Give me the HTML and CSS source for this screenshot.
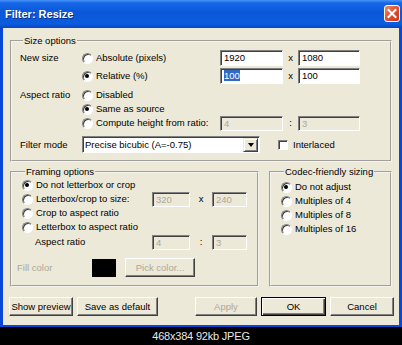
FILE: index.html
```html
<!DOCTYPE html>
<html>
	<head>
		<meta charset="UTF-8">
		<title>Filter: Resize</title>
		<link rel="stylesheet" href="styles.css">
	</head>
	<body>
		<div class="window">
			<div class="titlebar">
				<span class="title">Filter: Resize</span>
				<span class="close">
					<svg width="16" height="17" viewBox="0 0 16 17">
						<path d="M4.5 5 L11.5 12 M11.5 5 L4.5 12" stroke="#fff" stroke-width="2" stroke-linecap="square"/>
					</svg>
				</span>
			</div>
			<div class="client">
				<fieldset class="group size">
					<legend>Size options</legend>
					<div class="row h16">
						<span class="lbl">New size</span>
						<span class="opt"><i class="radio"></i>Absolute (pixels)</span>
						<span class="edit w63">1920</span><span class="sep">x</span><span class="edit w62">1080</span>
					</div>
					<div class="row h16 mt2">
						<span class="lbl"></span>
						<span class="opt"><i class="radio on"></i>Relative (%)</span>
						<span class="edit w63"><span class="sel">100</span></span><span class="sep">x</span><span class="edit w62">100</span>
					</div>
					<div class="row h14 mt4">
						<span class="lbl">Aspect ratio</span>
						<span class="opt"><i class="radio"></i>Disabled</span>
					</div>
					<div class="row h14">
						<span class="lbl"></span>
						<span class="opt"><i class="radio on"></i>Same as source</span>
					</div>
					<div class="row h14">
						<span class="lbl"></span>
						<span class="opt"><i class="radio"></i>Compute height from ratio:</span>
						<span class="edit w63 off small">4</span><span class="sep">:</span><span class="edit w62 off small">3</span>
					</div>
					<div class="row h17 mt6">
						<span class="lbl">Filter mode</span>
						<span class="combo"><span class="combo-text">Precise bicubic (A=-0.75)</span><span class="drop"><i class="arrow"></i></span></span>
						<span class="check"></span>Interlaced
					</div>
				</fieldset>

				<div class="lower">
					<fieldset class="group framing">
						<legend>Framing options</legend>
						<div class="row h14">
							<span class="opt"><i class="radio on"></i>Do not letterbox or crop</span>
						</div>
						<div class="row h14">
							<span class="opt wide"><i class="radio"></i>Letterbox/crop to size:</span>
							<span class="edit w38 off small">320</span><span class="sep w22">x</span><span class="edit w35 off small">240</span>
						</div>
						<div class="row h14">
							<span class="opt"><i class="radio"></i>Crop to aspect ratio</span>
						</div>
						<div class="row h14">
							<span class="opt"><i class="radio"></i>Letterbox to aspect ratio</span>
						</div>
						<div class="row h14 mt1">
							<span class="opt wide indent">Aspect ratio</span>
							<span class="edit w38 off small">4</span><span class="sep w22">:</span><span class="edit w35 off small">3</span>
						</div>
						<div class="row h19 mt9 fill">
							<span class="fill-lbl">Fill color</span>
							<span class="swatch"></span>
							<span class="btn off pick">Pick color...</span>
						</div>
					</fieldset>
					<fieldset class="group codec">
						<legend>Codec-friendly sizing</legend>
						<div class="row h14">
							<span class="opt"><i class="radio on"></i>Do not adjust</span>
						</div>
						<div class="row h14">
							<span class="opt"><i class="radio"></i>Multiples of 4</span>
						</div>
						<div class="row h14">
							<span class="opt"><i class="radio"></i>Multiples of 8</span>
						</div>
						<div class="row h14">
							<span class="opt"><i class="radio"></i>Multiples of 16</span>
						</div>
					</fieldset>
				</div>

				<div class="buttons">
					<span class="btn w64">Show preview</span>
					<span class="btn w81">Save as default</span>
					<span class="spacer"></span>
					<span class="btn off w62">Apply</span>
					<span class="btn default w65">OK</span>
					<span class="btn w64">Cancel</span>
				</div>
			</div>
		</div>
		<div class="caption">468x384 92kb JPEG</div>
	</body>
</html>
```

FILE: styles.css
```css
html, body{
	margin: 0;
	padding: 0;
	background: #000;
}
body{
	width: 402px;
	font-family: "Liberation Sans", Arial, sans-serif;
	font-size: 9.5px;
	color: #000;
}
.window{
	width: 402px;
	background: #0a46d8;
	padding-bottom: 2px;
}
.titlebar{
	height: 28px;
	display: flex;
	align-items: center;
	justify-content: space-between;
	padding: 0 2px 0 5px;
	box-sizing: border-box;
	background: linear-gradient(#4a94f8 0, #1565e6 3px, #0a58d8 45%, #0b5cde 85%, #0845c0 100%);
}
.title{
	color: #fff;
	font-weight: bold;
	font-size: 11px;
	text-shadow: 1px 1px 0 #0c2a8a;
	margin-top: -1px;
}
.close{
	width: 16px;
	height: 17px;
	box-sizing: border-box;
	border: 1px solid #fff;
	border-radius: 3px;
	background: linear-gradient(135deg, #f08a6c, #e0502f 50%, #c8381c);
	display: flex;
	margin-top: -1px;
}
.close svg{
	margin: -1px;
}
.client{
	margin: 0 3px;
	background: #ece9d8;
	padding: 7px 7px 9px;
	height: 297px;
	box-sizing: border-box;
}
.group{
	margin: 0;
	padding: 0;
	border: 2px groove #f4f3ee;
	min-width: 0;
}
.group legend{
	padding: 0 1px;
	margin-left: 3px;
	line-height: 12px;
}
.size{
	padding: 3px 0 7px 8px;
}
.lower{
	display: flex;
	gap: 10px;
	margin-top: 4px;
}
.framing{
	width: 249px;
	box-sizing: border-box;
	padding: 0 0 8px 10px;
}
.codec{
	flex: 1;
	padding: 2px 0 0 10px;
}
.row{
	display: flex;
	align-items: center;
	line-height: 12px;
	white-space: nowrap;
}
.h14{ height: 14px; }
.h16{ height: 16px; }
.h17{ height: 17px; }
.h19{ height: 19px; }
.mt1{ margin-top: 1px; }
.mt2{ margin-top: 2px; }
.mt4{ margin-top: 4px; }
.mt6{ margin-top: 6px; }
.mt9{ margin-top: 9px; }
.lbl{
	width: 62px;
}
.opt{
	width: 138px;
	display: flex;
	align-items: center;
}
.opt.wide{
	width: 130px;
}
.opt.indent{
	padding-left: 13px;
	box-sizing: border-box;
}
.radio{
	display: inline-block;
	position: relative;
	width: 11px;
	height: 11px;
	box-sizing: border-box;
	border-radius: 50%;
	border: 1px solid;
	border-color: #808080 #fff #fff #808080;
	box-shadow: inset 1px 1px 0 #404040;
	background: #fff;
	margin-right: 3px;
}
.radio.on::after{
	content: "";
	position: absolute;
	left: 2px;
	top: 2px;
	width: 4px;
	height: 4px;
	border-radius: 50%;
	background: #000;
}
.edit{
	box-sizing: border-box;
	height: 16px;
	border: 1px solid;
	border-color: #808080 #fff #fff #808080;
	box-shadow: inset 1px 1px 0 #404040;
	background: #fff;
	padding-left: 3px;
	line-height: 14px;
}
.edit.small{
	height: 15px;
	line-height: 13px;
}
.edit.off{
	background: #ece9d8;
	color: #aca899;
}
.w35{ width: 35px; }
.w38{ width: 38px; }
.w62{ width: 62px; }
.w63{ width: 63px; }
.w64{ width: 64px; }
.w65{ width: 65px; }
.w81{ width: 81px; }
.sel{
	background: #316ac5;
	color: #fff;
}
.sep{
	width: 15px;
	text-align: center;
}
.sep.w22{
	width: 22px;
}
.combo{
	width: 178px;
	height: 17px;
	box-sizing: border-box;
	border: 1px solid;
	border-color: #808080 #fff #fff #808080;
	box-shadow: inset 1px 1px 0 #404040;
	background: #fff;
	display: flex;
	padding: 1px 1px 0 2px;
}
.combo-text{
	flex: 1;
	line-height: 14px;
}
.drop{
	width: 15px;
	height: 14px;
	box-sizing: border-box;
	background: #ece9d8;
	border: 1px solid;
	border-color: #ece9d8 #404040 #404040 #ece9d8;
	box-shadow: inset 1px 1px 0 #fff, inset -1px -1px 0 #808080;
	display: flex;
	align-items: center;
	justify-content: center;
}
.arrow{
	width: 0;
	height: 0;
	border-left: 3.5px solid transparent;
	border-right: 3.5px solid transparent;
	border-top: 4px solid #000;
}
.check{
	width: 10px;
	height: 10px;
	box-sizing: border-box;
	border: 1px solid;
	border-color: #808080 #fff #fff #808080;
	box-shadow: inset 1px 1px 0 #404040;
	background: #fff;
	margin: 0 5px 0 18px;
}
.fill{
	margin-left: -5px;
}
.fill-lbl{
	width: 75px;
	color: #aca899;
}
.swatch{
	width: 24px;
	height: 18px;
	background: #000;
	margin-right: 9px;
}
.btn{
	height: 19px;
	box-sizing: border-box;
	background: #ece9d8;
	border: 1px solid;
	border-color: #fff #404040 #404040 #fff;
	box-shadow: inset -1px -1px 0 #808080;
	display: flex;
	align-items: center;
	justify-content: center;
	line-height: 12px;
}
.btn.off{
	color: #aca899;
}
.btn.default{
	border-color: #000;
	box-shadow: inset 1px 1px 0 #fff, inset -1px -1px 0 #404040, inset -2px -2px 0 #808080;
}
.pick{
	width: 70px;
}
.buttons{
	display: flex;
	gap: 4px;
	margin: 10px -2px 0 -1px;
}
.spacer{
	flex: 1;
}
.caption{
	height: 18px;
	line-height: 18px;
	text-align: center;
	color: #e8e8e8;
	font-size: 11px;
	letter-spacing: -0.2px;
}
```
